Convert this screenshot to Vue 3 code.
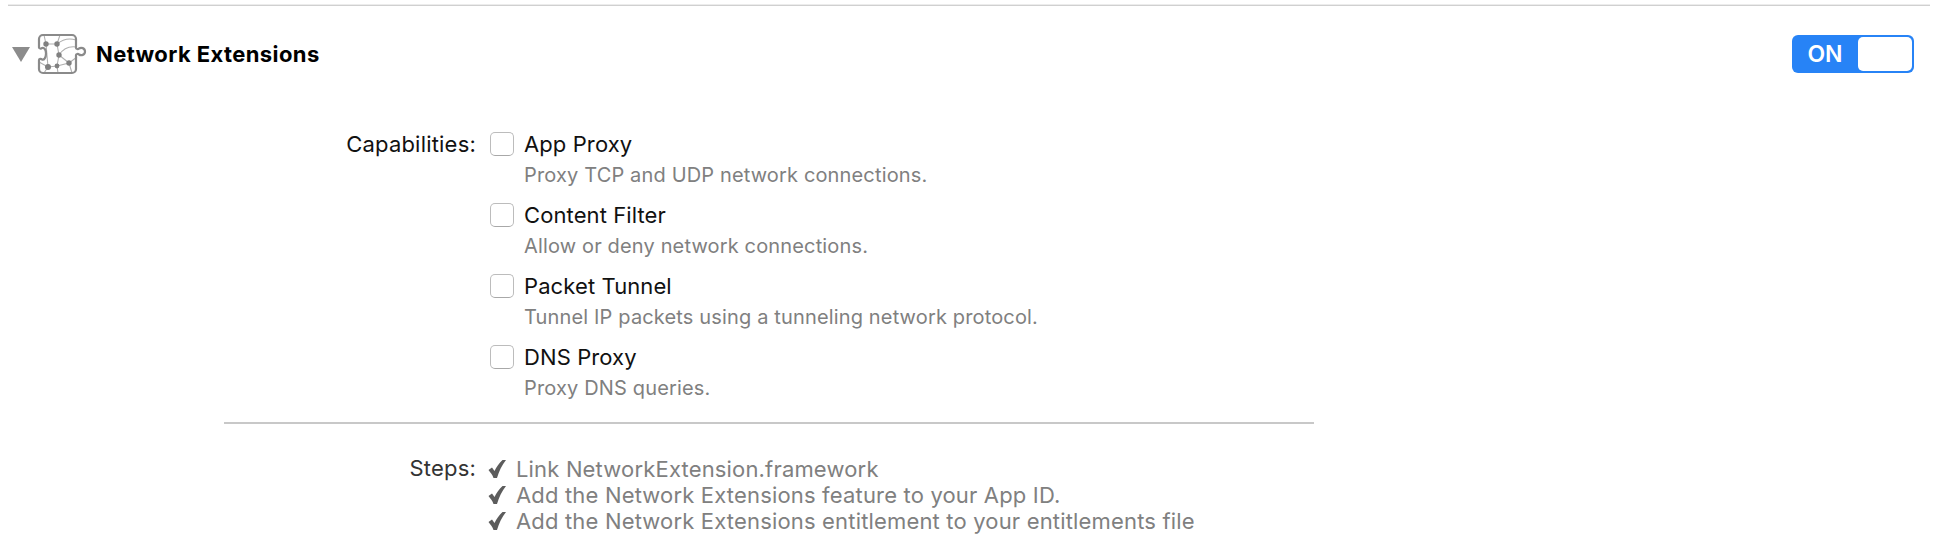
<script setup>
const capabilities = [
  { name: 'App Proxy', desc: 'Proxy TCP and UDP network connections.' },
  { name: 'Content Filter', desc: 'Allow or deny network connections.' },
  { name: 'Packet Tunnel', desc: 'Tunnel IP packets using a tunneling network protocol.' },
  { name: 'DNS Proxy', desc: 'Proxy DNS queries.' },
]
const steps = [
  'Link NetworkExtension.framework',
  'Add the Network Extensions feature to your App ID.',
  'Add the Network Extensions entitlement to your entitlements file',
]
</script>

<template>
  <div class="page">
    <div class="topline"></div>
    <div class="head">
      <span class="tri"></span>
      <svg class="icon" width="52" height="44" viewBox="0 0 52 44" fill="none">
        <path d="M10 12L8 3M21 12L24 3M10 12H21M21 12C27 7 34 6 40 8M21 12L23 23M23 23C27 17 33 14 40 15M10 12L12 35M12 35L21 34L33 31L41 25M23 23L33 31M23 23L21 34M12 35L8 41M21 34L22 41M33 31L36 41M3 30L12 35" stroke="#b0b0b0" stroke-width="1.100"/>
        <path d="M7 3H36a4 4 0 0 1 4 4v9c0 1 2 1.500 3 .5 2-1.500 6-.5 6 3s-4 4.500-6 3c-1-1-3-.5-3 .5V37a4 4 0 0 1-4 4H7a4 4 0 0 1-4-4V28c0-1.500 2-1.500 3-.5 2 1 4-2 4-6s-2-6.500-4-5.500c-1 1-3 .5-3-.5V7a4 4 0 0 1 4-4z" fill="none" stroke="#8a8a8a" stroke-width="2.200"/>
        <circle cx="10" cy="12" r="2.700" fill="#808080"/>
        <circle cx="21" cy="12" r="2.700" fill="#808080"/>
        <circle cx="23" cy="23" r="2.700" fill="#808080"/>
        <circle cx="12" cy="35" r="3" fill="#808080"/>
        <circle cx="21" cy="34" r="2.400" fill="#808080"/>
        <circle cx="33" cy="31" r="2.700" fill="#808080"/>
      </svg>
      <span class="title">Network Extensions</span>
      <div class="toggle">
        <span class="on">ON</span>
        <span class="knob"></span>
      </div>
    </div>

    <div class="form">
      <div class="row">
        <div class="label">Capabilities:</div>
        <div class="caps">
          <div v-for="c in capabilities" :key="c.name" class="cap">
            <span class="box"></span>
            <div>
              <div class="name">{{ c.name }}</div>
              <div class="desc">{{ c.desc }}</div>
            </div>
          </div>
        </div>
      </div>
      <div class="divider"></div>
      <div class="row">
        <div class="label label--steps">Steps:</div>
        <div class="steps">
          <div v-for="s in steps" :key="s" class="step">
            <svg class="check" width="18" height="18" viewBox="0 0 18 18">
              <path d="M0.500 10L4 7.500l2.500 3.500C8.500 7 11 3 14.500 0H18C14 5 11 11 9 18H5.500C4.500 15 2.500 12.500 0.500 10z" fill="#5c5c5c"/>
            </svg>
            <span>{{ s }}</span>
          </div>
        </div>
      </div>
    </div>
  </div>
</template>

<style>
html, body { background: #fff; }
</style>

<style scoped>
.page {
  width: 1942px;
  height: 556px;
  overflow: hidden;
  background: #fff;
  font-family: Inter, "Liberation Sans", sans-serif;
  font-size: 22px;
  color: #111;
}
.topline {
  height: 1px;
  margin: 4px 12px 0 8px;
  border-top: 1px solid #ececec;
  background: #d0d0d0;
}
.head {
  display: flex;
  align-items: center;
  height: 40px;
  margin-top: 28px;
  padding: 0 28px 0 12px;
}
.tri {
  width: 0;
  height: 0;
  border-left: 9px solid transparent;
  border-right: 9px solid transparent;
  border-top: 15px solid #8c8c8c;
}
.icon { margin-left: 6px; }
.title {
  margin-left: 8px;
  font-size: 22px;
  font-weight: 700;
  letter-spacing: 0.4px;
  color: #000;
}
.toggle {
  display: flex;
  margin-left: auto;
  width: 122px;
  height: 38px;
  padding: 2px;
  box-sizing: border-box;
  border-radius: 6px;
  background: #2783f6;
}
.on {
  width: 64px;
  padding-right: 2px;
  box-sizing: border-box;
  line-height: 34px;
  text-align: center;
  color: #fff;
  font-size: 23px;
  font-weight: 600;
}
.knob {
  flex: 1;
  background: #fff;
  border-radius: 5px;
}
.form {
  width: 1090px;
  margin: 58px 0 0 224px;
}
.row { display: flex; }
.label {
  width: 252px;
  text-align: right;
  line-height: 24px;
  letter-spacing: 0.2px;
}
.label--steps { color: #333; }
.caps {
  display: flex;
  flex-direction: column;
  gap: 16px;
  margin-left: 14px;
}
.cap {
  display: flex;
  gap: 10px;
}
.box {
  flex: none;
  width: 24px;
  height: 24px;
  box-sizing: border-box;
  border: 1px solid #bcbcbc;
  border-bottom-color: #a8a8a8;
  border-radius: 5px;
  background: #fff;
}
.name {
  line-height: 24px;
  letter-spacing: 0.1px;
}
.desc {
  margin-top: 7px;
  line-height: 24px;
  font-size: 20px;
  letter-spacing: 0.15px;
  color: #808080;
}
.divider {
  height: 2px;
  margin: 22px 0 32px;
  background: #c8c8c8;
}
.steps {
  margin-left: 12px;
  letter-spacing: 0.17px;
  color: #808080;
}
.step {
  display: flex;
  align-items: center;
  gap: 10px;
  height: 26px;
}
.check { flex: none; }
</style>
